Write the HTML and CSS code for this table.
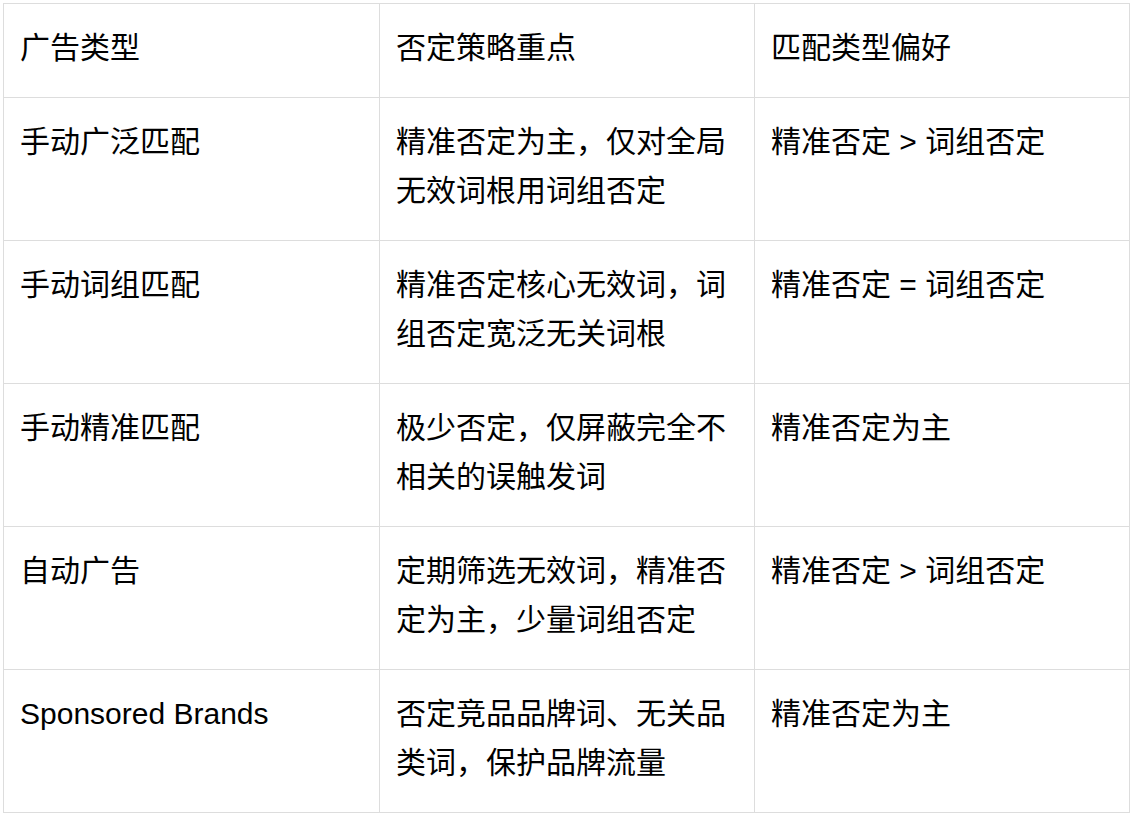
FILE: index.html
```html
<!DOCTYPE html>
<html lang="zh-CN">
<head>
<meta charset="utf-8">
<title>否定策略</title>
<link rel="stylesheet" href="styles.css">
</head>
<body>
<table class="grid">
  <colgroup>
    <col class="c1"><col class="c2"><col class="c3">
  </colgroup>
  <thead>
    <tr><th>广告类型</th><th>否定策略重点</th><th>匹配类型偏好</th></tr>
  </thead>
  <tbody>
    <tr><td>手动广泛匹配</td><td>精准否定为主，仅对全局无效词根用词组否定</td><td>精准否定 &gt; 词组否定</td></tr>
    <tr><td>手动词组匹配</td><td>精准否定核心无效词，词组否定宽泛无关词根</td><td>精准否定 = 词组否定</td></tr>
    <tr><td>手动精准匹配</td><td>极少否定，仅屏蔽完全不相关的误触发词</td><td>精准否定为主</td></tr>
    <tr><td>自动广告</td><td>定期筛选无效词，精准否定为主，少量词组否定</td><td>精准否定 &gt; 词组否定</td></tr>
    <tr><td>Sponsored Brands</td><td>否定竞品品牌词、无关品类词，保护品牌流量</td><td>精准否定为主</td></tr>
  </tbody>
</table>
</body>
</html>
```
FILE: styles.css
```css
html, body {
  margin: 0;
  padding: 0;
  background: #ffffff;
}
body {
  padding: 3px;
  font-family: "Liberation Sans", "Noto Sans CJK SC", sans-serif;
  color: #000000;
}
.grid {
  border-collapse: collapse;
  table-layout: fixed;
  width: 1126px;
  font-size: 30px;
  line-height: 49px;
}
.c1 { width: 376px; }
.c2 { width: 375px; }
.c3 { width: 375px; }
.grid th,
.grid td {
  border: 1px solid #dddddd;
  padding: 19px 16px 25px 16px;
  text-align: left;
  vertical-align: top;
  font-weight: normal;
}
```
